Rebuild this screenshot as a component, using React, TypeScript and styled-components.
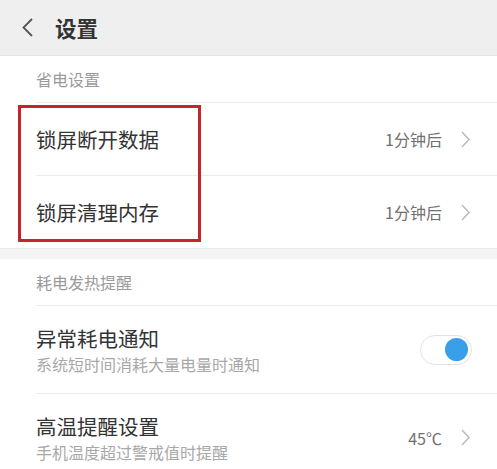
import styled, { createGlobalStyle } from "styled-components";

const GlobalStyle = createGlobalStyle`
  html, body {
    margin: 0;
    padding: 0;
    background: #ffffff;
  }
  body {
    font-family: "Noto Sans CJK SC", "Noto Sans", Roboto, sans-serif;
  }
`

const Page = styled.div`
  width: 497px;
  min-height: 469px;
  background: #fff;
  overflow: hidden;
`

const Header = styled.header`
  height: 56px;
  background: #efefef;
  border-bottom: 1px solid #e4e4e4;
  display: flex;
  align-items: center;
  padding-left: 22px;
  box-sizing: border-box;
`

const Title = styled.h1`
  margin: 0 0 0 22px;
  font-size: 21.5px;
  font-weight: 700;
  color: #333;
  line-height: 1;
`

const SectionLabel = styled.div`
  height: 46px;
  padding-left: 36px;
  display: flex;
  align-items: center;
  font-size: 16px;
  color: #9a9a9a;
`

const List = styled.div`
  position: relative;
`

const Row = styled.div<{ tall?: boolean }>`
  margin-left: 36px;
  padding-right: 27px;
  height: ${({ tall }) => (tall ? 87 : 72)}px;
  border-top: 1px solid #ebebeb;
  display: flex;
  align-items: center;
  justify-content: space-between;
`

const Texts = styled.div`
  display: flex;
  flex-direction: column;
`

const RowTitle = styled.div`
  font-size: 20.5px;
  color: #333;
  line-height: 28px;
`

const RowSub = styled.div`
  font-size: 16px;
  color: #a8a8a8;
  line-height: 24px;
`

const Right = styled.div`
  display: flex;
  align-items: center;
  gap: 19px;
`

const Value = styled.span`
  font-size: 16px;
  color: #707070;
`

const Gap = styled.div`
  height: 10px;
  background: #f4f4f4;
  border-top: 1px solid #ececec;
`

const Toggle = styled.div`
  width: 52px;
  height: 30px;
  box-sizing: border-box;
  border: 1px solid #e2e2e2;
  border-radius: 15px;
  background: #fff;
  display: flex;
  align-items: center;
  justify-content: flex-end;
  padding-right: 3px;
  margin-right: -2px;
`

const Knob = styled.div`
  width: 23px;
  height: 23px;
  border-radius: 50%;
  background: #3a9fe9;
`

const Highlight = styled.div`
  position: absolute;
  left: 18px;
  top: 3px;
  width: 183px;
  height: 137px;
  box-sizing: border-box;
  border: 3px solid #c4242b;
  pointer-events: none;
`

const Back = () => (
  <svg width="11" height="19" viewBox="0 0 11 19">
    <polyline points="10,1 1.5,9.5 10,18" fill="none" stroke="#555" strokeWidth="1.8" />
  </svg>
)

const Chevron = () => (
  <svg width="9" height="17" viewBox="0 0 9 17">
    <polyline points="1,1 8,8.5 1,16" fill="none" stroke="#b8b8b8" strokeWidth="1.4" />
  </svg>
)

const App = () => {
  return (
    <Page>
      <GlobalStyle />
      <Header>
        <Back />
        <Title>设置</Title>
      </Header>

      <SectionLabel>省电设置</SectionLabel>
      <List>
        <Row>
          <RowTitle>锁屏断开数据</RowTitle>
          <Right>
            <Value>1分钟后</Value>
            <Chevron />
          </Right>
        </Row>
        <Row>
          <RowTitle>锁屏清理内存</RowTitle>
          <Right>
            <Value>1分钟后</Value>
            <Chevron />
          </Right>
        </Row>
        <Highlight />
      </List>

      <Gap />

      <SectionLabel>耗电发热提醒</SectionLabel>
      <List>
        <Row tall>
          <Texts>
            <RowTitle>异常耗电通知</RowTitle>
            <RowSub>系统短时间消耗大量电量时通知</RowSub>
          </Texts>
          <Toggle>
            <Knob />
          </Toggle>
        </Row>
        <Row tall>
          <Texts>
            <RowTitle>高温提醒设置</RowTitle>
            <RowSub>手机温度超过警戒值时提醒</RowSub>
          </Texts>
          <Right>
            <Value>45℃</Value>
            <Chevron />
          </Right>
        </Row>
      </List>
    </Page>
  )
}

export default App
